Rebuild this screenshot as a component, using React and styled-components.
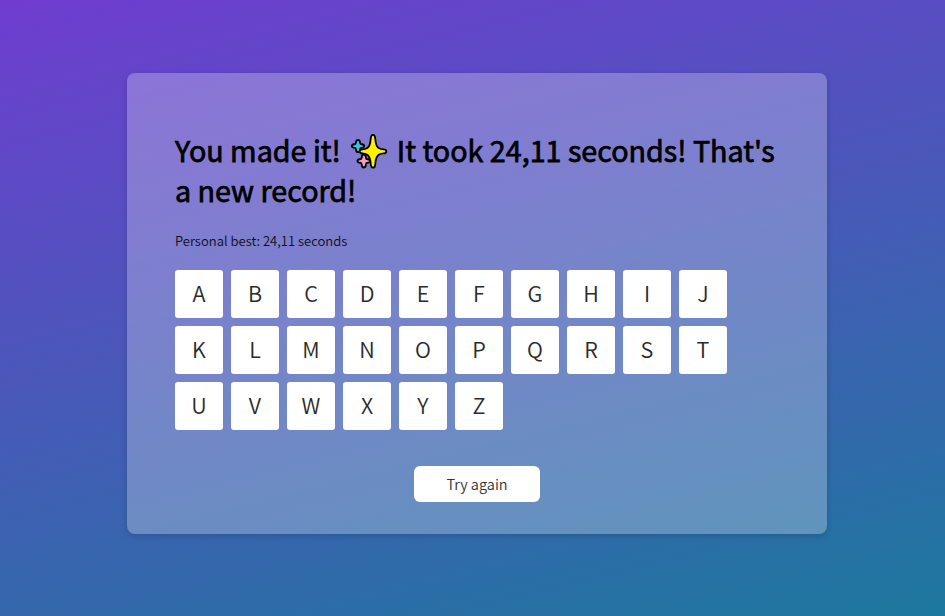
import React from "react";
import styled, { createGlobalStyle } from "styled-components";

const GlobalStyle = createGlobalStyle`
  * { box-sizing: border-box; }
  body {
    margin: 0;
    font-family: "Noto Sans CJK JP", "Noto Sans CJK SC", sans-serif;
    font-weight: 350;
  }
`;

const Page = styled.main`
  display: flex;
  justify-content: center;
  align-items: flex-start;
  height: 100vh;
  padding: 73px 0 0 9px;
  overflow: hidden;
  background: linear-gradient(166deg, #6f3dd0 0%, #1d789e 100%);
`;

const Card = styled.section`
  display: flex;
  flex-direction: column;
  width: 700px;
  height: 461px;
  padding: 57px 48px 32px;
  border-radius: 8px;
  background: rgba(255, 255, 255, 0.26);
  box-shadow: 0 2px 6px rgba(0, 0, 0, 0.16);
`;

const Title = styled.h1`
  margin: 0;
  color: #000;
  font-size: 28.68px;
  font-weight: 400;
  line-height: 40px;
  white-space: nowrap;
  -webkit-text-stroke: 0.75px #000;
`;

const Sparkles = styled.svg`
  width: 38px;
  height: 36px;
  margin: 0 9px;
  vertical-align: -6.5px;

  path {
    stroke: #000;
    stroke-width: 3.6px;
    stroke-linejoin: round;
    paint-order: stroke;
  }
`;

const Best = styled.p`
  margin: 21px 0 0;
  color: #0c0e14;
  font-size: 13.05px;
  line-height: 20px;
`;

const Letters = styled.ul`
  display: flex;
  flex-wrap: wrap;
  gap: 8px;
  margin: 19px 0 0;
  padding: 0;
  list-style: none;
`;

const Letter = styled.li`
  width: 48px;
  height: 48px;
  border-radius: 3px;
  background: #fff;
  color: #2a2a2a;
  font-size: 21.6px;
  line-height: 46px;
  text-align: center;
`;

const RetryButton = styled.button`
  align-self: center;
  width: 126px;
  height: 36px;
  margin-top: 36px;
  padding: 0;
  border: 0;
  border-radius: 6px;
  background: #fff;
  color: #333;
  font-family: inherit;
  font-size: 14.5px;
  font-weight: 350;
  line-height: 36px;
`;

export default function App() {
  return (
    <>
      <GlobalStyle />
      <Page>
        <Card>
          <Title>
            You made it!
            <Sparkles viewBox="0 0 38 36" aria-hidden="true">
              <path
                fill="#37c4dd"
                d="M8 7.7Q9 7.7 9.2 9.7Q9.4 11.6 10.8 11.9Q13.3 12.1 13.3 13Q13.3 13.9 10.8 14.1Q9.4 14.4 9.2 16.3Q9 18.3 8 18.3Q7 18.3 6.8 16.3Q6.6 14.4 5.2 14.1Q2.7 13.9 2.7 13Q2.7 12.1 5.2 11.9Q6.6 11.6 6.8 9.7Q7 7.7 8 7.7Z"
              />
              <path
                fill="#f4a0bd"
                d="M13.8 22.4Q14.8 22.4 15 24.5Q15.2 26.6 16.6 26.9Q19.3 27.1 19.3 28Q19.3 28.9 16.6 29.1Q15.2 29.4 15 31.5Q14.8 33.6 13.8 33.6Q12.8 33.6 12.6 31.5Q12.4 29.4 11 29.1Q8.3 28.9 8.3 28Q8.3 27.1 11 26.9Q12.4 26.6 12.6 24.5Q12.8 22.4 13.8 22.4Z"
              />
              <path
                fill="#fff100"
                d="M23 2.8Q24.2 2.8 24.4 6Q25 14.3 28.7 16.1Q30.5 17.1 33.5 17.3Q35.4 17.4 35.4 18.4Q35.4 19.4 33.5 19.5Q30.5 19.7 28.7 20.8Q25 22.7 24.4 30.5Q24.2 33.8 23 33.8Q21.8 33.8 21.6 30.5Q21 22.7 17.3 20.8Q15.5 19.7 12.5 19.5Q10.6 19.4 10.6 18.4Q10.6 17.4 12.5 17.3Q15.5 17.1 17.3 16.1Q21 14.3 21.6 6Q21.8 2.8 23 2.8Z"
              />
            </Sparkles>
            It took 24,11 seconds! That's
            <br />a new record!
          </Title>
          <Best>Personal best: 24,11 seconds</Best>
          <Letters>
            {[..."ABCDEFGHIJKLMNOPQRSTUVWXYZ"].map((letter) => (
              <Letter key={letter}>{letter}</Letter>
            ))}
          </Letters>
          <RetryButton>Try again</RetryButton>
        </Card>
      </Page>
    </>
  );
}
